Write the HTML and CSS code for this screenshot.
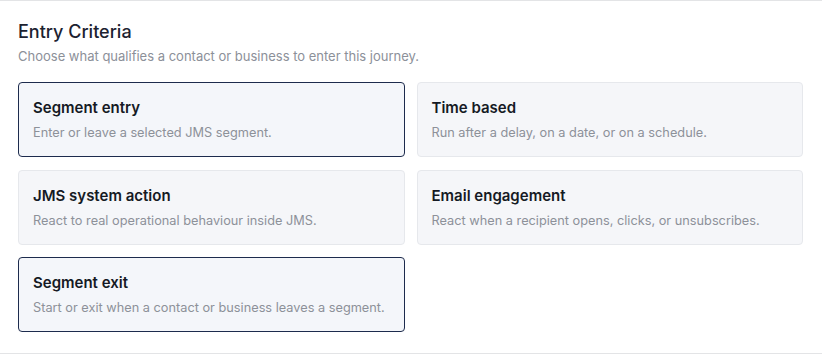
FILE: index.html
```html
<!DOCTYPE html>
<html>
<head>
<meta charset="utf-8">
<link rel="stylesheet" href="styles.css">
</head>
<body>
<section class="panel">
  <h2 class="title">Entry Criteria</h2>
  <p class="subtitle">Choose what qualifies a contact or business to enter this journey.</p>
  <div class="grid">
    <div class="card selected">
      <div class="card-title">Segment entry</div>
      <div class="card-desc">Enter or leave a selected JMS segment.</div>
    </div>
    <div class="card">
      <div class="card-title">Time based</div>
      <div class="card-desc">Run after a delay, on a date, or on a schedule.</div>
    </div>
    <div class="card">
      <div class="card-title">JMS system action</div>
      <div class="card-desc">React to real operational behaviour inside JMS.</div>
    </div>
    <div class="card">
      <div class="card-title">Email engagement</div>
      <div class="card-desc">React when a recipient opens, clicks, or unsubscribes.</div>
    </div>
    <div class="card selected">
      <div class="card-title">Segment exit</div>
      <div class="card-desc">Start or exit when a contact or business leaves a segment.</div>
    </div>
  </div>
</section>
</body>
</html>
```
FILE: styles.css
```css
* { box-sizing: border-box; }
html, body { margin: 0; padding: 0; background: #fff; }
body { font-family: Inter, "Noto Sans", sans-serif; }
.panel {
  border-top: 1px solid #e3e4e6;
  border-bottom: 1px solid #e3e4e6;
  padding: 17px 19px 21px 18px;
}
.title {
  margin: 0;
  font-size: 18px;
  line-height: 28px;
  font-weight: 500;
  color: #1c2230;
}
.subtitle {
  margin: 0;
  font-size: 13px;
  line-height: 20px;
  color: #8c9099;
}
.grid {
  margin-top: 16px;
  display: grid;
  grid-template-columns: 1fr 1fr;
  gap: 12.5px 12px;
}
.card {
  border: 1px solid #e6e8ec;
  border-radius: 4px;
  background: #f5f6f9;
  padding: 15px 14px 15px 14px;
  height: 75px;
}
.card.selected {
  border-color: #1d2b4d;
  background: #f4f6fa;
}
.card-title {
  font-size: 15px;
  line-height: 20px;
  font-weight: 600;
  color: #151a24;
}
.card-desc {
  margin-top: 6px;
  font-size: 12.75px;
  line-height: 18px;
  color: #8d9199;
}
```
